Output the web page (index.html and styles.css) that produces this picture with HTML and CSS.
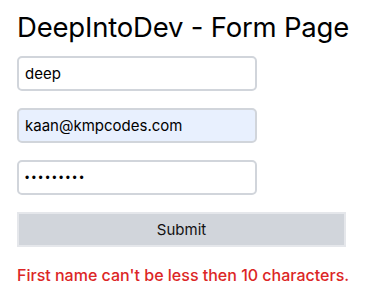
FILE: index.html
```html
<!DOCTYPE html>
<html>
<head>
<meta charset="utf-8">
<link rel="stylesheet" href="styles.css">
</head>
<body>
<div class="page">
  <h1 class="title">DeepIntoDev - Form Page</h1>
  <form class="form">
    <input class="field" type="text" value="deep">
    <input class="field field-autofill" type="email" value="kaan@kmpcodes.com">
    <input class="field field-password" type="password" value="123456789">
    <button class="submit" type="button">Submit</button>
  </form>
  <p class="error">First name can't be less then 10 characters.</p>
</div>
</body>
</html>
```

FILE: styles.css
```css
html, body {
  margin: 0;
  padding: 0;
  background: #ffffff;
}
.page {
  padding: 9px 17px 0 17px;
  font-family: Inter, "Liberation Sans", sans-serif;
  color: #000;
}
.title {
  margin: 0;
  font-size: 27.5px;
  font-weight: 400;
  line-height: 36px;
  letter-spacing: -0.2px;
  white-space: nowrap;
}
.form {
  margin-top: 11px;
  display: flex;
  flex-direction: column;
  align-items: flex-start;
  gap: 17px;
}
.field {
  box-sizing: border-box;
  width: 240px;
  height: 35px;
  margin: 0;
  padding: 0 6px;
  border: 2px solid #d1d5db;
  border-radius: 5px;
  background: #fff;
  font-family: Inter, "Liberation Sans", sans-serif;
  font-size: 15px;
  color: #000;
  outline: none;
}
.field-autofill {
  background: #e8f0fe;
}
.field-password {
  font-family: "Liberation Sans", sans-serif;
  font-size: 12px;
  letter-spacing: 2.6px;
}
.submit {
  box-sizing: border-box;
  width: 329px;
  height: 35px;
  margin: 0;
  border: 2px solid #e5e7eb;
  background: #d1d5db;
  font-family: Inter, "Liberation Sans", sans-serif;
  font-size: 15px;
  color: #111;
  border-radius: 0;
}
.error {
  margin: 18px 0 0 0;
  color: #dc2626;
  font-size: 16px;
  font-weight: 500;
  line-height: 20px;
  white-space: nowrap;
}
```
